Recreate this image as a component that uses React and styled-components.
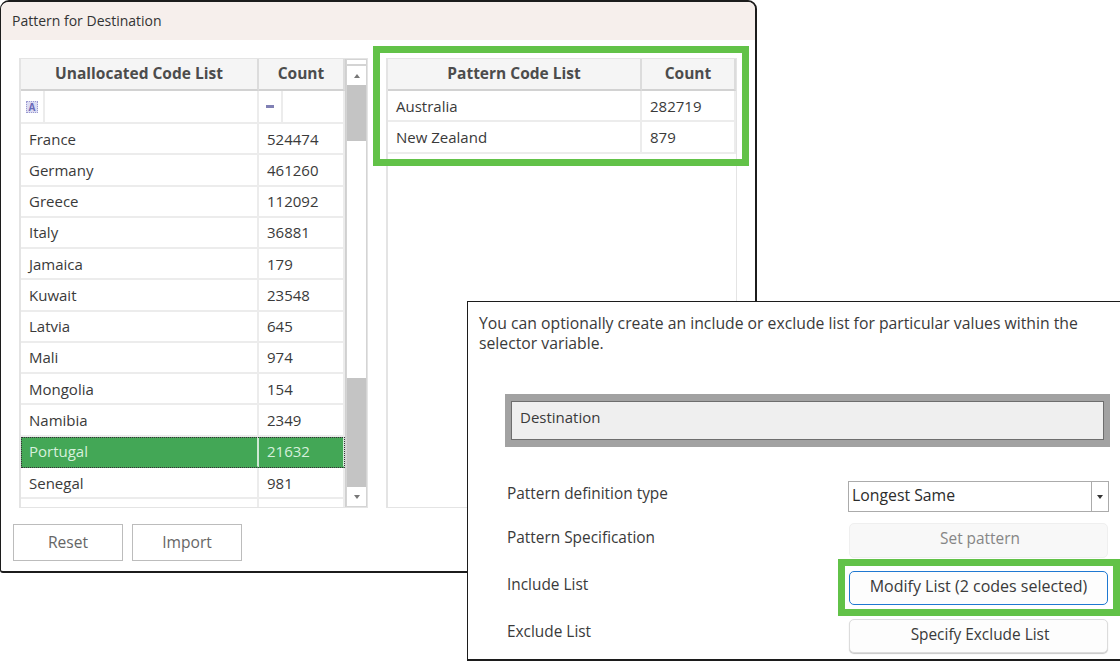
import React from "react";
import styled, { createGlobalStyle } from "styled-components";

const GlobalStyle = createGlobalStyle`
  html, body {
    margin: 0;
    padding: 0;
    background: #fff;
  }
  body {
    font-family: "Open Sans", "Noto Sans", "Liberation Sans", sans-serif;
    font-size: 15px;
    color: #3a3a3a;
  }
`;

const Desktop = styled.div`
  position: relative;
  width: 1120px;
  height: 661px;
  overflow: hidden;
`;

const PatternWindow = styled.section`
  position: absolute;
  left: 0;
  top: 0;
  width: 757px;
  height: 573px;
  box-sizing: border-box;
  border: 1px solid #1c1c1c;
  border-top-width: 2px;
  border-right-width: 2px;
  border-bottom-width: 2px;
  border-radius: 9px 9px 0 3px;
  background: #fff;
  overflow: hidden;
`;

const TitleBar = styled.header`
  height: 38px;
  box-sizing: border-box;
  display: flex;
  align-items: center;
  padding: 0 0 2px 11px;
  background: #f6efec;
  font-size: 14px;
  color: #333;
`;

const Grids = styled.div`
  display: flex;
  gap: 18px;
  padding: 18px 0 0 18px;
`;

const GridFrame = styled.div`
  display: flex;
  box-sizing: border-box;
  width: ${(p) => p.$width}px;
  height: 450px;
  border: 1px solid #e4e4e4;
  border-left-width: 2px;
  overflow: hidden;
`;

const Table = styled.div`
  flex: 1;
  min-width: 0;
`;

const Row = styled.div`
  display: grid;
  grid-template-columns: ${(p) => p.$cols};
  box-sizing: border-box;
  height: ${(p) => p.$height || 31.28}px;
`;

const HeaderCell = styled.div`
  display: flex;
  align-items: center;
  justify-content: center;
  box-sizing: border-box;
  padding-bottom: 2px;
  background: #f5f5f5;
  border-right: 2px solid #dcdcdc;
  border-bottom: 2px solid #d2d2d2;
  font-weight: 700;
  font-size: 15.5px;
  color: #4c4c4c;
`;

const Cell = styled.div`
  display: flex;
  align-items: center;
  box-sizing: border-box;
  padding-left: 8px;
  border-right: 2px solid ${(p) => (p.$selected ? "#cfe8d4" : "#ececec")};
  border-bottom: 2px solid ${(p) => (p.$selected ? "transparent" : "#ececec")};
  background: ${(p) => (p.$selected ? "#43a756" : "#fff")};
  color: ${(p) => (p.$selected ? "#d6f0dc" : "#3a3a3a")};
`;

const SelectedRow = styled(Row)`
  outline: 1px dotted #3a2a3a;
  outline-offset: -1px;
`;

const FilterCell = styled.div`
  display: flex;
  box-sizing: border-box;
  border-right: 2px solid #ececec;
  border-bottom: 2px solid #ececec;
`;

const FilterButton = styled.div`
  display: flex;
  align-items: center;
  justify-content: center;
  width: 22px;
  border-right: 2px solid #ececec;
`;

const ContainsIcon = styled.span`
  display: flex;
  align-items: center;
  justify-content: center;
  width: 12px;
  height: 12px;
  background: #dcdcf2;
  border: 1px dotted #9a9ad0;
  box-sizing: border-box;
  font-size: 10px;
  font-weight: 700;
  line-height: 1;
  color: #6a6ab8;
`;

const DashIcon = styled.span`
  width: 8px;
  height: 3px;
  background: #8080b4;
`;

const ScrollBar = styled.div`
  display: flex;
  flex-direction: column;
  flex: none;
  box-sizing: border-box;
  width: 22px;
  padding: 0 1px;
  background: #d4d4d4;
  border-left: 1px solid #d0d0d0;
`;

const ScrollCap = styled.div`
  height: 4px;
  margin: 1px 0 2px;
  background: #fff;
`;

const ScrollButton = styled.div`
  display: flex;
  align-items: center;
  justify-content: center;
  flex: none;
  height: 19px;
  background: #fff;
`;

const Arrow = styled.span`
  width: 0;
  height: 0;
  border-left: 3.5px solid transparent;
  border-right: 3.5px solid transparent;
  border-${(p) => (p.$up ? "bottom" : "top")}: 4px solid ${(p) => p.$color || "#777"};
`;

const ScrollThumb = styled.div`
  flex: none;
  height: ${(p) => p.$height}px;
  background: #c4c4c4;
`;

const ScrollGap = styled.div`
  flex: none;
  height: ${(p) => p.$height}px;
  background: #fff;
`;

const Footer = styled.div`
  display: flex;
  gap: 9px;
  padding: 16px 0 0 12px;
`;

const FlatButton = styled.button`
  width: 110px;
  height: 37px;
  box-sizing: border-box;
  padding-bottom: 3px;
  border: 1.5px solid #bcbcbc;
  background: #fff;
  font: inherit;
  font-size: 15.6px;
  color: #666;
`;

const Highlight = styled.div`
  position: absolute;
  box-sizing: border-box;
  left: ${(p) => p.$left}px;
  top: ${(p) => p.$top}px;
  width: ${(p) => p.$width}px;
  height: ${(p) => p.$height}px;
  border: 7px solid #62c248;
  pointer-events: none;
  z-index: 3;
`;

const OptionsWindow = styled.section`
  position: absolute;
  left: 467px;
  top: 301px;
  width: 660px;
  height: 360px;
  box-sizing: border-box;
  padding: 11px 0 0 11px;
  border: 1px solid #1c1c1c;
  border-bottom-width: 2px;
  background: #fff;
  z-index: 2;
  font-size: 15.4px;
`;

const Intro = styled.p`
  width: 612px;
  margin: 0;
  line-height: 20px;
  font-size: 15.75px;
  color: #3a3a3a;
`;

const VariableOuter = styled.div`
  box-sizing: border-box;
  width: 605px;
  height: 53px;
  margin: 41px 0 0 26px;
  padding: 7px 6px;
  background: #a2a2a2;
`;

const VariableInner = styled.div`
  display: flex;
  align-items: center;
  box-sizing: border-box;
  height: 39px;
  padding: 0 0 7px 8px;
  border: 1px solid #6e6e6e;
  background: #efefef;
  font-size: 15px;
`;

const Form = styled.div`
  display: grid;
  grid-template-columns: 341px 261px;
  grid-template-rows: 42px 48px 48px 34px;
  margin: 34px 0 0 28px;
  align-items: start;
`;

const Label = styled.div`
  padding-top: ${(p) => p.$offset}px;
  line-height: 20px;
  color: #3a3a3a;
`;

const Select = styled.div`
  display: flex;
  height: 31px;
  box-sizing: border-box;
  border: 1px solid #ababab;
  font-size: 15.8px;
`;

const SelectValue = styled.div`
  display: flex;
  align-items: center;
  flex: 1;
  padding: 0 0 3px 3px;
  color: #2c2c2c;
`;

const SelectToggle = styled.div`
  display: flex;
  align-items: center;
  justify-content: center;
  width: 16px;
  border-left: 1px solid #ababab;
`;

const FormButton = styled.button`
  justify-self: center;
  width: 259px;
  height: ${(p) => p.$height || 34}px;
  box-sizing: border-box;
  padding: 0 0 4px ${(p) => (p.$active ? 0 : 3)}px;
  border-radius: 5px;
  font: inherit;
  font-size: ${(p) => (p.$active ? 16 : 15.4)}px;
  color: ${(p) => (p.$disabled ? "#868686" : "#3a3a3a")};
  background: ${(p) => (p.$disabled ? "#f8f8f8" : "#fdfdfd")};
  border: 1px solid ${(p) => (p.$active ? "#1f78d1" : p.$disabled ? "#efefef" : "#dcdcdc")};
  box-shadow: ${(p) => (p.$disabled || p.$active ? "none" : "0 1px 1px #c8c8c8")};
`;

const unallocated = [
  ["France", "524474"],
  ["Germany", "461260"],
  ["Greece", "112092"],
  ["Italy", "36881"],
  ["Jamaica", "179"],
  ["Kuwait", "23548"],
  ["Latvia", "645"],
  ["Mali", "974"],
  ["Mongolia", "154"],
  ["Namibia", "2349"],
  ["Portugal", "21632"],
  ["Senegal", "981"],
];

const LEFT_COLS = "238px 86px";
const RIGHT_COLS = "254px 94px";

const App = () => {
  return (
    <Desktop>
      <GlobalStyle />
      <PatternWindow>
        <TitleBar>Pattern for Destination</TitleBar>
        <Grids>
          <GridFrame $width={349}>
            <Table>
              <Row $cols={LEFT_COLS} $height={32}>
                <HeaderCell>Unallocated Code List</HeaderCell>
                <HeaderCell>Count</HeaderCell>
              </Row>
              <Row $cols={LEFT_COLS} $height={33}>
                <FilterCell>
                  <FilterButton>
                    <ContainsIcon>A</ContainsIcon>
                  </FilterButton>
                </FilterCell>
                <FilterCell>
                  <FilterButton>
                    <DashIcon />
                  </FilterButton>
                </FilterCell>
              </Row>
              {unallocated.map(([name, count]) => {
                const selected = name === "Portugal";
                const RowKind = selected ? SelectedRow : Row;
                return (
                  <RowKind key={name} $cols={LEFT_COLS}>
                    <Cell $selected={selected}>{name}</Cell>
                    <Cell $selected={selected}>{count}</Cell>
                  </RowKind>
                );
              })}
              <Row $cols={LEFT_COLS} $height={10}>
                <Cell />
                <Cell />
              </Row>
            </Table>
            <ScrollBar>
              <ScrollCap />
              <ScrollButton>
                <Arrow $up />
              </ScrollButton>
              <ScrollThumb $height={56} />
              <ScrollGap $height={237} />
              <ScrollThumb $height={109} />
              <ScrollButton>
                <Arrow />
              </ScrollButton>
            </ScrollBar>
          </GridFrame>
          <GridFrame $width={351}>
            <Table>
              <Row $cols={RIGHT_COLS} $height={32}>
                <HeaderCell>Pattern Code List</HeaderCell>
                <HeaderCell>Count</HeaderCell>
              </Row>
              <Row $cols={RIGHT_COLS}>
                <Cell>Australia</Cell>
                <Cell>282719</Cell>
              </Row>
              <Row $cols={RIGHT_COLS}>
                <Cell>New Zealand</Cell>
                <Cell>879</Cell>
              </Row>
            </Table>
          </GridFrame>
        </Grids>
        <Footer>
          <FlatButton>Reset</FlatButton>
          <FlatButton>Import</FlatButton>
        </Footer>
      </PatternWindow>

      <Highlight $left={373} $top={46} $width={376} $height={120} />

      <OptionsWindow>
        <Intro>
          You can optionally create an include or exclude list for particular values within the selector variable.
        </Intro>
        <VariableOuter>
          <VariableInner>Destination</VariableInner>
        </VariableOuter>
        <Form>
          <Label $offset={3}>Pattern definition type</Label>
          <Select>
            <SelectValue>Longest Same</SelectValue>
            <SelectToggle>
              <Arrow $color="#333" />
            </SelectToggle>
          </Select>
          <Label $offset={5}>Pattern Specification</Label>
          <FormButton $disabled $height={35}>
            Set pattern
          </FormButton>
          <Label $offset={4}>Include List</Label>
          <FormButton $active>Modify List (2 codes selected)</FormButton>
          <Label $offset={3}>Exclude List</Label>
          <FormButton>Specify Exclude List</FormButton>
        </Form>
      </OptionsWindow>

      <Highlight $left={838} $top={559} $width={282} $height={57} />
    </Desktop>
  );
};

export default App;
